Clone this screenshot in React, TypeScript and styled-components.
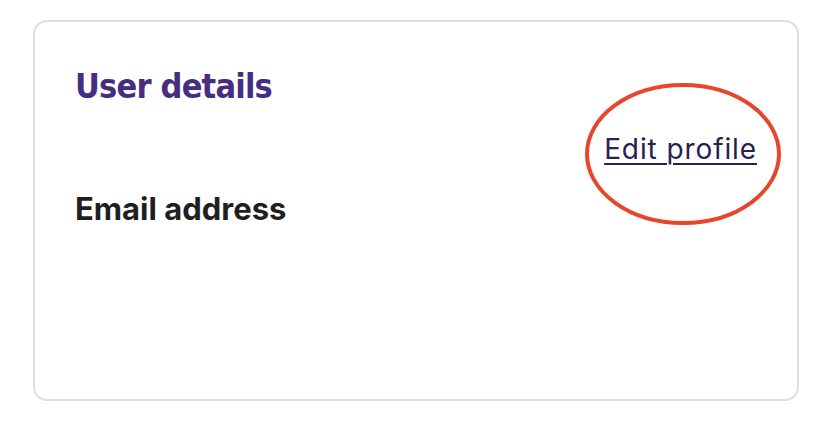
import React from 'react'
import styled, { createGlobalStyle } from 'styled-components'

const GlobalStyle = createGlobalStyle`
  html, body {
    margin: 0;
    padding: 0;
    background: #fff;
  }
  body {
    font-family: Inter, "Liberation Sans", sans-serif;
  }
`

const Page = styled.div`
  padding: 20px 23px 0 33px;
`

const Card = styled.section`
  box-sizing: border-box;
  width: 766px;
  height: 381px;
  border: 2px solid #dedede;
  border-radius: 14px;
  padding: 44px 40px 0 40px;
`

const Title = styled.h2`
  margin: 0;
  font-family: "DejaVu Sans Condensed", "DejaVu Sans", sans-serif;
  font-stretch: condensed;
  font-weight: 700;
  font-size: 34px;
  line-height: 40px;
  letter-spacing: -0.8px;
  color: #472d82;
`

const ActionRow = styled.div`
  display: flex;
  justify-content: flex-end;
  margin-top: 26px;
`

const LinkWrap = styled.div`
  position: relative;
`

const EditLink = styled.a`
  font-family: Inter, "Liberation Sans", sans-serif;
  font-size: 28px;
  line-height: 34px;
  letter-spacing: 0.9px;
  color: #28204f;
  text-decoration: underline;
  text-decoration-thickness: 2px;
  text-underline-offset: 4px;
  cursor: pointer;
`

const Circle = styled.svg`
  position: absolute;
  left: -20px;
  top: -50px;
  width: 198px;
  height: 144px;
  pointer-events: none;
`

const FieldLabel = styled.h3`
  margin: 24px 0 0;
  font-family: Inter, "Liberation Sans", sans-serif;
  font-weight: 700;
  font-size: 31px;
  line-height: 38px;
  color: #1f1f23;
`

export default function App() {
  return (
    <>
      <GlobalStyle />
      <Page>
        <Card>
          <Title>User details</Title>
          <ActionRow>
            <LinkWrap>
              <EditLink>Edit profile</EditLink>
              <Circle viewBox="0 0 198 144">
                <ellipse cx="99" cy="72" rx="96" ry="69" fill="none" stroke="#e8462b" strokeWidth="4" />
              </Circle>
            </LinkWrap>
          </ActionRow>
          <FieldLabel>Email address</FieldLabel>
        </Card>
      </Page>
    </>
  )
}
